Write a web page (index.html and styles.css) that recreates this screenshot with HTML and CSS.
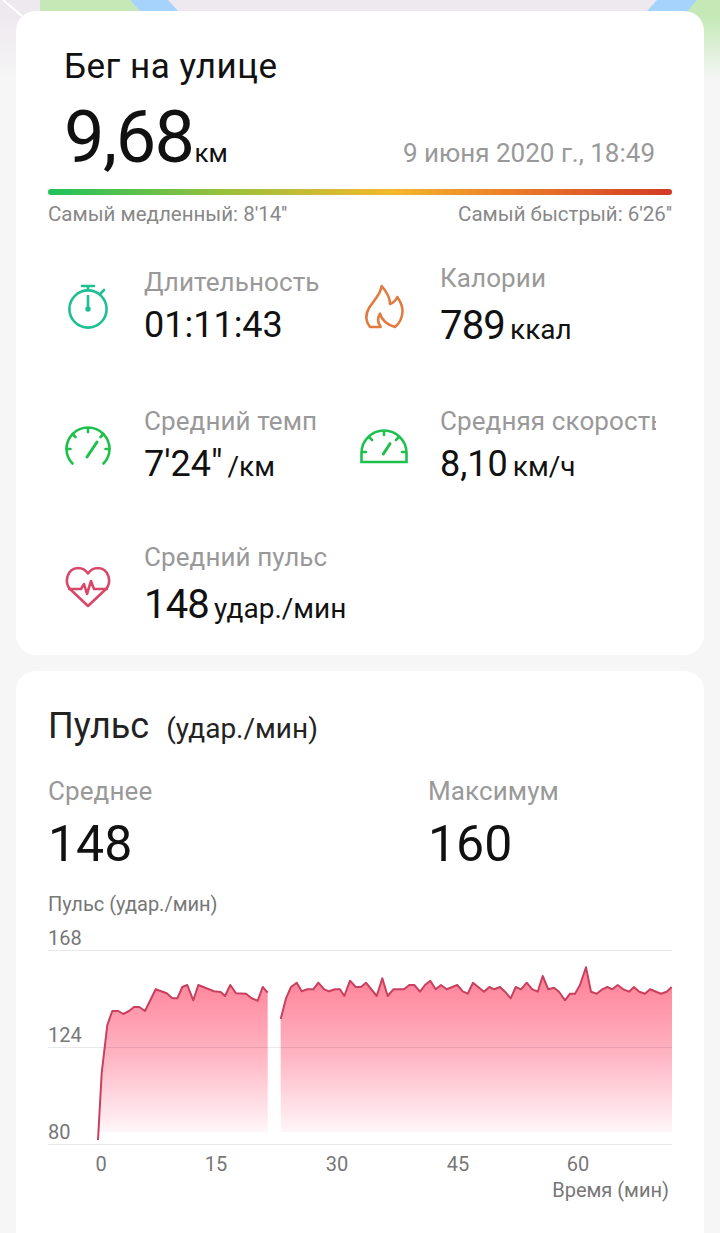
FILE: index.html
```html
<!DOCTYPE html>
<html lang="ru">
<head>
    <meta charset="UTF-8">
    <meta name="viewport" content="width=device-width, initial-scale=1.0">
    <title>Бег на улице</title>
    <link rel="stylesheet" href="styles.css">
</head>
<body>
    <!-- map peeking out behind the first card -->
    <svg class="map" viewBox="0 0 720 80" aria-hidden="true">
        <defs>
            <linearGradient id="mapFade" x1="0" y1="0" x2="0" y2="1">
                <stop offset="0" stop-color="#f6f6f6" stop-opacity="0"/>
                <stop offset="0.2" stop-color="#f6f6f6" stop-opacity="0"/>
                <stop offset="1" stop-color="#f6f6f6"/>
            </linearGradient>
        </defs>
        <rect width="720" height="80" fill="#eee9ee"/>
        <polygon points="40,0 130,0 140,11 140,20 40,20" fill="#c4e9b6"/>
        <polygon points="130,0 168,0 178,11 178,20 140,20 140,11" fill="#a6d3fb"/>
        <polygon points="657,0 697,0 688,11 680,20 640,20 647,11" fill="#a6d3fb"/>
        <polygon points="697,0 720,0 720,80 680,80 680,20" fill="#c4e9b6"/>
        <line x1="3" y1="0" x2="22" y2="16" stroke="#fff" stroke-width="2"/>
        <rect width="720" height="80" fill="url(#mapFade)"/>
    </svg>

    <div class="page">
        <section class="card workout">
            <div class="workout-head">
                <h1>Бег на улице</h1>
                <div class="distance-row">
                    <div class="distance">9,68<span>км</span></div>
                    <div class="date">9 июня 2020 г., 18:49</div>
                </div>
            </div>

            <div class="pace-bar"></div>
            <div class="pace-labels">
                <span>Самый медленный: 8'14''</span>
                <span>Самый быстрый: 6'26''</span>
            </div>

            <div class="stats">
                <div class="stat">
                    <div class="stat-icon">
                        <svg viewBox="0 0 48 48" fill="none" stroke="#1fbf94" stroke-width="2.6" stroke-linecap="round">
                            <circle cx="24" cy="24" r="18.6"/>
                            <path d="M18 1h12M24 1v4M36 9l4-4"/>
                            <path d="M24 11v13"/>
                            <circle cx="24" cy="24" r="1.4" fill="#1fbf94"/>
                        </svg>
                    </div>
                    <div class="stat-text">
                        <div class="stat-label">Длительность</div>
                        <div class="stat-value">01:11:43</div>
                    </div>
                </div>
                <div class="stat">
                    <div class="stat-icon">
                        <svg viewBox="0 0 48 48" fill="none" stroke="#e07c42" stroke-width="2.6" stroke-linejoin="round">
                            <path d="M10 42C6 37 5 30 9 23 13 16 20 11 21.700 1 26 6 30 12 30 19 33 18 36 15 37.300 12 40 16 43 21 42.500 27 42 33 40 38 35 42 28 40 22 36 20 28.700 17 33 18 38 20.700 42Z"/>
                        </svg>
                    </div>
                    <div class="stat-text">
                        <div class="stat-label">Калории</div>
                        <div class="stat-value large">789<span>ккал</span></div>
                    </div>
                </div>
                <div class="stat">
                    <div class="stat-icon">
                        <svg viewBox="0 0 48 48" fill="none" stroke="#1cc04a" stroke-width="2.6" stroke-linecap="round">
                            <path d="M8.500 37.500C4.500 33.500 2.500 28.500 2.500 23A21.500 21.500 0 0 1 45.500 23C45.500 28.500 43.500 33.500 39.500 37.500"/>
                            <path d="M24 2v4M8.500 8l3 3M39.500 8l-3 3M2.500 23h4M41.500 23h4"/>
                            <path d="M23 31L33 16" stroke-width="3"/>
                        </svg>
                    </div>
                    <div class="stat-text">
                        <div class="stat-label">Средний темп</div>
                        <div class="stat-value">7'24"<span>/км</span></div>
                    </div>
                </div>
                <div class="stat clipped">
                    <div class="stat-icon">
                        <svg viewBox="0 0 48 48" fill="none" stroke="#1cc04a" stroke-width="2.600" stroke-linecap="round">
                            <path d="M1.500 36V27A22.500 22.500 0 0 1 46.500 27V36Z"/>
                            <path d="M24 5v4M9 11l3 3M39 11l-3 3M2 26h4M42 26h4"/>
                            <path d="M23.300 28L30 17.700" stroke-width="3"/>
                        </svg>
                    </div>
                    <div class="stat-text">
                        <div class="stat-label">Средняя скорость</div>
                        <div class="stat-value">8,10<span>км/ч</span></div>
                    </div>
                </div>
                <div class="stat">
                    <div class="stat-icon">
                        <svg viewBox="0 0 48 48" fill="none" stroke="#d9486b" stroke-width="2.600" stroke-linejoin="round">
                            <path d="M24 41L6 24C0 17 3 3.500 14 3 18 3 22 5.500 24 8.500 26 5.500 30 3 34 3 45 3.500 48 17 42 24Z"/>
                            <path d="M4 24h13l3 -5 3 10 4 -13 3 8h14"/>
                        </svg>
                    </div>
                    <div class="stat-text">
                        <div class="stat-label">Средний пульс</div>
                        <div class="stat-value large">148<span>удар./мин</span></div>
                    </div>
                </div>
            </div>
        </section>

        <section class="card pulse">
            <h2>Пульс<span>(удар./мин)</span></h2>
            <div class="pulse-summary">
                <div>
                    <div class="stat-label">Среднее</div>
                    <div class="pulse-value">148</div>
                </div>
                <div>
                    <div class="stat-label">Максимум</div>
                    <div class="pulse-value">160</div>
                </div>
            </div>
            <div class="chart-title">Пульс (удар./мин)</div>

            <svg class="chart" viewBox="48 925 624 280">
                <defs>
                    <linearGradient id="pulseFill" gradientUnits="userSpaceOnUse" x1="0" y1="975" x2="0" y2="1134">
                        <stop offset="0" stop-color="#ff8298"/>
                        <stop offset="0.5" stop-color="#ffb4c2"/>
                        <stop offset="1" stop-color="#fff8fb"/>
                    </linearGradient>
                </defs>

                <polygon fill="url(#pulseFill)" points="98,1132 98,1140 101.700,1073 107.300,1025 112.300,1011 118.300,1011 123.300,1014 129,1011 134,1007 139.300,1007 145,1011 155.700,989.300 166.700,993.300 172.300,998.300 177.300,998.300 182.300,987 187.300,985 193.300,1000.300 198.300,985 214,991.300 220.700,992 225,996 230.300,985 236,993.300 246,993.700 251.700,998.300 257.700,1000.700 262.700,987 267.700,992.700 267.700,1132"/>
                <polygon fill="url(#pulseFill)" points="280.700,1132 280.700,1019 286,998.300 291,987 296.700,982.700 301.700,991.300 307.300,989.300 313.300,989.300 318.300,982.700 324.300,989.300 329,991.300 335,989.300 340,989.300 344.300,996 350,980.700 355.700,987 361,987 366,982.700 376.700,996 382.300,978.300 387.700,996 393.300,989.300 404,989.300 409.300,985 414.300,985 420,991.700 425,985 430.300,980.700 435.700,989.300 441,985 446.700,989.300 457.300,985 462.700,991.300 467.700,993.700 473,982.700 484,991.700 489.300,987 494.300,989.300 500,987 505,991.700 510.700,998.300 515.700,987 521,989.300 526.700,982.700 532.300,989.300 537.700,991.700 542.700,976 548.300,989.300 554,987.700 559,991.700 565,1000.300 570,993.700 575,993.700 580,985 586,967.300 591,991.700 596.700,993.700 602.300,989.300 607.300,987 612.300,989.300 617.700,985 623.300,989.300 629,991.700 634,987 639.300,991.700 645,993.700 650,989.300 661,993.700 666.700,991.700 671.700,987 672,987 672,1132"/>

                <g class="grid">
                    <line x1="48" y1="950.500" x2="672" y2="950.500"/>
                    <line x1="48" y1="1047.500" x2="672" y2="1047.500"/>
                    <line x1="48" y1="1144.500" x2="672" y2="1144.500"/>
                </g>

                <g class="pulse-line">
                    <polyline points="98,1140 101.700,1073 107.300,1025 112.300,1011 118.300,1011 123.300,1014 129,1011 134,1007 139.300,1007 145,1011 155.700,989.300 166.700,993.300 172.300,998.300 177.300,998.300 182.300,987 187.300,985 193.300,1000.300 198.300,985 214,991.300 220.700,992 225,996 230.300,985 236,993.300 246,993.700 251.700,998.300 257.700,1000.700 262.700,987 267.700,992.700"/>
                    <polyline points="280.700,1019 286,998.300 291,987 296.700,982.700 301.700,991.300 307.300,989.300 313.300,989.300 318.300,982.700 324.300,989.300 329,991.300 335,989.300 340,989.300 344.300,996 350,980.700 355.700,987 361,987 366,982.700 376.700,996 382.300,978.300 387.700,996 393.300,989.300 404,989.300 409.300,985 414.300,985 420,991.700 425,985 430.300,980.700 435.700,989.300 441,985 446.700,989.300 457.300,985 462.700,991.300 467.700,993.700 473,982.700 484,991.700 489.300,987 494.300,989.300 500,987 505,991.700 510.700,998.300 515.700,987 521,989.300 526.700,982.700 532.300,989.300 537.700,991.700 542.700,976 548.300,989.300 554,987.700 559,991.700 565,1000.300 570,993.700 575,993.700 580,985 586,967.300 591,991.700 596.700,993.700 602.300,989.300 607.300,987 612.300,989.300 617.700,985 623.300,989.300 629,991.700 634,987 639.300,991.700 645,993.700 650,989.300 661,993.700 666.700,991.700 671.700,987"/>
                </g>

                <g class="axis">
                    <text x="48" y="945">168</text>
                    <text x="48" y="1042">124</text>
                    <text x="48" y="1139">80</text>
                    <text x="101" y="1171" text-anchor="middle">0</text>
                    <text x="216" y="1171" text-anchor="middle">15</text>
                    <text x="337" y="1171" text-anchor="middle">30</text>
                    <text x="458" y="1171" text-anchor="middle">45</text>
                    <text x="578" y="1171" text-anchor="middle">60</text>
                    <text x="669" y="1197" text-anchor="end">Время (мин)</text>
                </g>
            </svg>
        </section>
    </div>
</body>
</html>
```

FILE: styles.css
```css
:root {
    --text-dark: #111;
    --text-grey: #999;
    --text-axis: #777;
}

* {
    box-sizing: border-box;
    margin: 0;
    padding: 0;
}

html, body {
    height: 1233px;
    overflow: hidden;
}

body {
    background: #f6f6f6;
    color: var(--text-dark);
    font-family: Roboto, 'Noto Sans', sans-serif;
    position: relative;
}

.map {
    position: absolute;
    top: 0;
    left: 0;
    width: 720px;
    height: 80px;
}

.page {
    position: relative;
    padding: 11px 16px 0;
    display: flex;
    flex-direction: column;
    gap: 16px;
}

.card {
    background: #fff;
    border-radius: 20px;
    padding: 0 32px;
}

.workout {
    height: 644px;
}

.workout-head {
    padding: 32px 17px 0 16px;
}

h1 {
    font-size: 35px;
    font-weight: 400;
    line-height: 48px;
    letter-spacing: 0.5px;
}

.distance-row {
    display: flex;
    justify-content: space-between;
    align-items: baseline;
    margin-top: 12px;
}

.distance {
    font-size: 72px;
    line-height: 70px;
    letter-spacing: -1.5px;
}

.distance span {
    font-size: 26px;
    letter-spacing: 0;
    margin-left: 1px;
}

.date {
    font-size: 26px;
    color: var(--text-grey);
}

.pace-bar {
    height: 6px;
    margin-top: 1px;
    border-radius: 3px;
    background: linear-gradient(90deg, #1fc25c 0%, #a0bf3a 30%, #f4b82b 55%, #ea7b2a 75%, #d23a25 100%);
}

.pace-labels {
    display: flex;
    justify-content: space-between;
    margin-top: 7px;
    font-size: 20.5px;
    line-height: 24px;
    color: #888;
}

.stats {
    display: grid;
    grid-template-columns: 296px 312px;
    grid-template-rows: 142px 139px 139px;
    margin-top: 12px;
}

.stat {
    display: flex;
    align-items: center;
}

/* the long label runs out of the card's column, as in the app */
.stat.clipped {
    overflow: hidden;
}

.stat-icon {
    width: 48px;
    height: 48px;
    margin: 0 32px 0 16px;
    flex-shrink: 0;
}

.stat-icon svg {
    display: block;
    width: 48px;
    height: 48px;
    overflow: visible;
}

.stat-text {
    white-space: nowrap;
}

.stat-label {
    font-size: 26px;
    line-height: 32px;
    letter-spacing: 0.1px;
    color: var(--text-grey);
}

.stat-value {
    font-size: 36px;
    line-height: 54px;
}

.stat-value.large {
    font-size: 40px;
    letter-spacing: -0.8px;
    margin-top: 5px;
}

.stat-value span {
    font-size: 28px;
    letter-spacing: 0;
    margin-left: 5px;
}

/* runs past the bottom of the window, so no rounded corners show there */
.pulse {
    height: 600px;
}

h2 {
    font-size: 36px;
    font-weight: 400;
    line-height: 44px;
    padding-top: 33px;
    height: 77px;
    color: #222;
}

h2 span {
    font-size: 28px;
    margin-left: 17px;
}

.pulse-summary {
    display: grid;
    grid-template-columns: 380px 1fr;
    margin-top: 27px;
}

.pulse-value {
    font-size: 50px;
    line-height: 58px;
    margin-top: 8px;
}

.chart-title {
    font-size: 20px;
    line-height: 24px;
    color: var(--text-axis);
    margin-top: 19px;
}

.chart {
    display: block;
    width: 624px;
    height: 280px;
    margin-top: 9px;
}

.grid line {
    stroke: rgba(0, 0, 0, 0.09);
    stroke-width: 1;
}

.pulse-line polyline {
    fill: none;
    stroke: #c9405f;
    stroke-width: 2;
    stroke-linejoin: round;
}

.axis text {
    font-size: 20px;
    fill: var(--text-axis);
}
```
